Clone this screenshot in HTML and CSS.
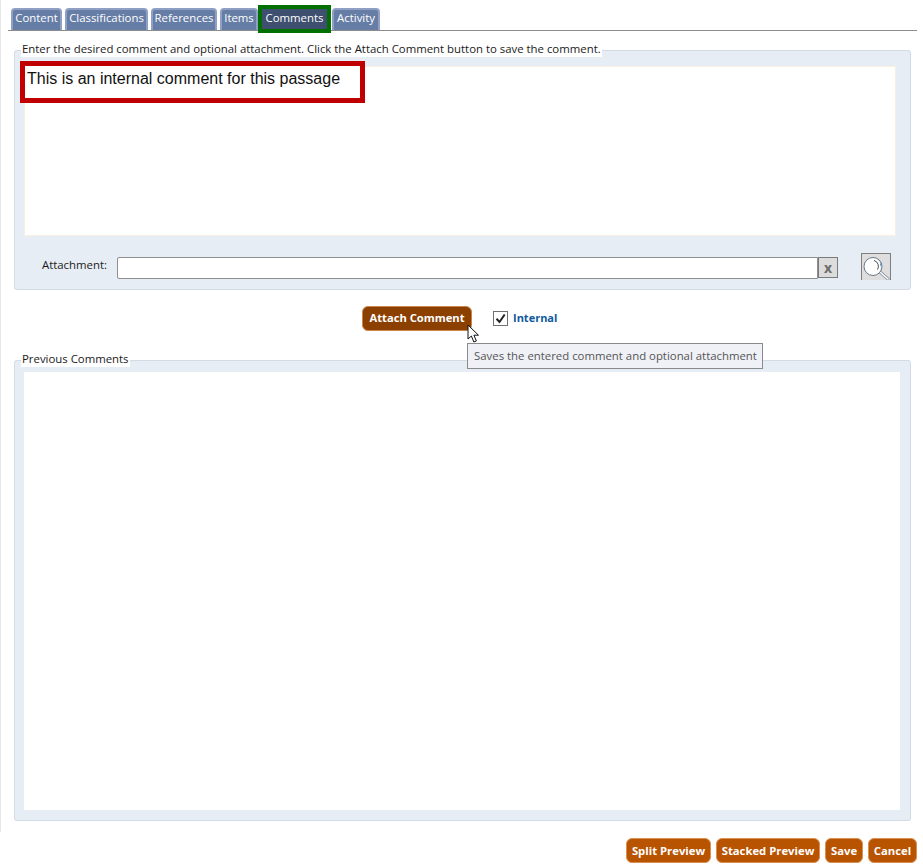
FILE: index.html
```html
<!DOCTYPE html>
<html lang="en">
<head>
<meta charset="utf-8">
<title>Comments</title>
<link rel="stylesheet" href="styles.css">
</head>
<body>
<div class="page">
  <nav class="tabs">
    <a class="tab tab-content">Content</a>
    <a class="tab tab-class">Classifications</a>
    <a class="tab tab-ref">References</a>
    <a class="tab tab-items">Items</a>
    <a class="tab tab-active">Comments</a>
    <a class="tab tab-activity">Activity</a>
  </nav>

  <fieldset class="panel panel-entry">
    <legend class="legend">Enter the desired comment and optional attachment. Click the Attach Comment button to save the comment.</legend>
    <div class="textarea">
      <div class="highlight">This is an internal comment for this passage</div>
    </div>
    <div class="attach-row">
      <label class="attach-label">Attachment:</label>
      <div class="attach-input"></div>
      <button class="clear-btn">x</button>
      <button class="search-btn" aria-label="Browse">
        <svg width="28" height="26" viewBox="0 0 28 26">
          <path d="M17 18l8 7" stroke="#8b97a0" stroke-width="3" stroke-linecap="round" fill="none"/>
          <path d="M17 18l8 7" stroke="#fff" stroke-width="1.4" stroke-linecap="round" fill="none"/>
          <circle cx="10" cy="12.5" r="9" fill="#fff" stroke="#6b7986" stroke-width="1"/>
          <path d="M12 4.2a8.5 8.5 0 0 1 3.8 14.2a6.6 6.6 0 0 0 1.6 -7.5a7 7 0 0 0 -5.4 -6.7z" fill="#1f6fb5"/>
          <path d="M11 6.5a6 6 0 0 1 3.5 9" fill="none" stroke="#222" stroke-width="0.8"/>
        </svg>
      </button>
    </div>
  </fieldset>

  <div class="action-row">
    <button class="btn btn-dark">Attach Comment</button>
    <span class="check"><svg width="13" height="13" viewBox="0 0 13 13"><path d="M2.5 6.8l3 3.2l5.2-7.5" fill="none" stroke="#222" stroke-width="2"/></svg></span>
    <span class="check-label">Internal</span>
    <svg class="cursor" width="14" height="20" viewBox="0 0 14 20">
      <path d="M1 1v14l3.4-3 2.4 6 2.6-1-2.5-5.8h4.6z" fill="#fff" stroke="#111" stroke-width="1"/>
    </svg>
    <div class="tooltip">Saves the entered comment and optional attachment</div>
  </div>

  <fieldset class="panel panel-prev">
    <legend class="legend">Previous Comments</legend>
    <div class="prev-box"></div>
  </fieldset>

  <div class="footer">
    <button class="btn btn-orange">Split Preview</button>
    <button class="btn btn-orange">Stacked Preview</button>
    <button class="btn btn-orange">Save</button>
    <button class="btn btn-orange">Cancel</button>
  </div>
</div>
</body>
</html>
```

FILE: styles.css
```css
* { box-sizing: border-box; }
html, body { margin: 0; padding: 0; background: #fff; }
body { font-family: "Open Sans", "Noto Sans", sans-serif; font-size: 11.38px; color: #1a1a1a; }

.page {
  position: relative;
  width: 923px;
  height: 868px;
  padding-top: 5px;
}
.page::before {
  content: "";
  position: absolute;
  left: 0;
  top: 0;
  width: 1px;
  height: 832px;
  background: #e8e8e8;
}

.tabs {
  display: flex;
  align-items: flex-end;
  height: 26px;
  margin-left: 8px;
  width: 909px;
  padding-left: 3px;
  border-bottom: 1px solid #8c8c8c;
}
.tab {
  display: block;
  height: 22px;
  margin-right: 3px;
  margin-bottom: 0;
  text-align: center;
  line-height: 16px;
  color: #fff;
  background: #667da6;
  border: 2px solid #8fa0c4;
  border-bottom: 0;
  border-radius: 4px 4px 0 0;
  white-space: nowrap;
}
.tab-content { width: 51px; }
.tab-class { width: 83px; }
.tab-ref { width: 66px; }
.tab-items { width: 38px; margin-right: 0; }
.tab-activity { width: 48px; margin-right: 0; }
.tab-active {
  width: 73px;
  height: 28px;
  margin-bottom: -3px;
  margin-right: 1px;
  line-height: 18px;
  background: #3f4f6f;
  border: 4px solid #007000;
  border-radius: 0;
  position: relative;
}

.panel {
  margin: 0 0 0 14px;
  width: 897px;
  min-width: 0;
  padding: 0;
  background: #e7edf5;
  border: 1px solid #d3dbe6;
  border-radius: 3px;
  position: relative;
}
.legend {
  position: absolute;
  top: -10px;
  left: 6px;
  padding: 0 1px;
  line-height: 16px;
  background: #fff;
  color: #1a1a1a;
  white-space: nowrap;
}
.panel-entry { height: 240px; margin-top: 19px; padding: 15px 14px 0 9px; }
.panel-prev { height: 461px; margin-top: 29px; padding: 11px 10px 0 9px; }

.textarea {
  position: relative;
  height: 170px;
  background: #fff;
  border: 1px solid #fbefe0;
}
.highlight {
  position: absolute;
  left: -5px;
  top: -6px;
  width: 345px;
  height: 42px;
  padding: 2px 2px;
  border: 5px solid #c00000;
  background: #fff;
  font-family: "Liberation Sans", Arial, sans-serif;
  font-size: 16px;
  line-height: 22px;
  color: #111;
  white-space: nowrap;
}

.attach-row {
  display: flex;
  align-items: flex-start;
  margin-top: 21px;
  padding-left: 18px;
}
.attach-label { width: 75px; margin-top: 0; line-height: 16px; }
.attach-input {
  width: 701px;
  height: 22px;
  background: #fff;
  border: 1px solid #8f8f8f;
  border-radius: 2px 0 0 2px;
}
.clear-btn {
  width: 20px;
  height: 21px;
  padding: 0;
  font: bold 14px/18px "Open Sans", sans-serif;
  color: #6d6d6d;
  background: #dcdcdc;
  border: 1px solid #7a7a7a;
}
.search-btn {
  display: block;
  width: 30px;
  height: 27px;
  margin: -4px 0 0 23px;
  padding: 0;
  background: #dedede;
  border: 1px solid #7e7e7e;
  border-bottom: 0;
}
.search-btn svg { display: block; margin-left: 1px; }

.action-row {
  position: relative;
  display: flex;
  align-items: center;
  height: 25px;
  margin-top: 16px;
  padding-left: 362px;
}
.btn {
  display: block;
  height: 25px;
  padding: 0;
  font-family: "Open Sans", sans-serif;
  font-size: 11.2px;
  font-weight: 700;
  line-height: 22px;
  color: #fff;
  border-radius: 6px;
  white-space: nowrap;
}
.btn-dark {
  width: 110px;
  padding-bottom: 2px;
  background: #8b4000;
  border: 1px solid #c8864a;
}
.btn-orange {
  font-size: 11.3px;
  background: #b85300;
  border: 1px solid #d99050;
}
.check {
  display: block;
  width: 15px;
  height: 15px;
  margin-left: 21px;
  margin-top: -1px;
  padding: 0;
  background: #fff;
  border: 1px solid #707070;
}
.check svg { display: block; }
.check-label {
  margin-left: 5px;
  margin-top: -2px;
  font-size: 11px;
  font-weight: 700;
  color: #0f5a9e;
}
.cursor {
  position: absolute;
  left: 467px;
  top: 18px;
  z-index: 3;
}
.tooltip {
  position: absolute;
  left: 467px;
  top: 37px;
  z-index: 2;
  width: 296px;
  height: 26px;
  padding-left: 6px;
  line-height: 24px;
  color: #555;
  background: #f0f1f7;
  border: 1px solid #8a8a8a;
  white-space: nowrap;
}

.prev-box { height: 438px; background: #fff; }

.footer {
  display: flex;
  justify-content: flex-end;
  gap: 5px;
  margin-top: 17px;
  width: 917px;
}
.footer .btn:nth-child(1) { width: 85px; }
.footer .btn:nth-child(2) { width: 104px; }
.footer .btn:nth-child(3) { width: 38px; }
.footer .btn:nth-child(4) { width: 49px; }
```
